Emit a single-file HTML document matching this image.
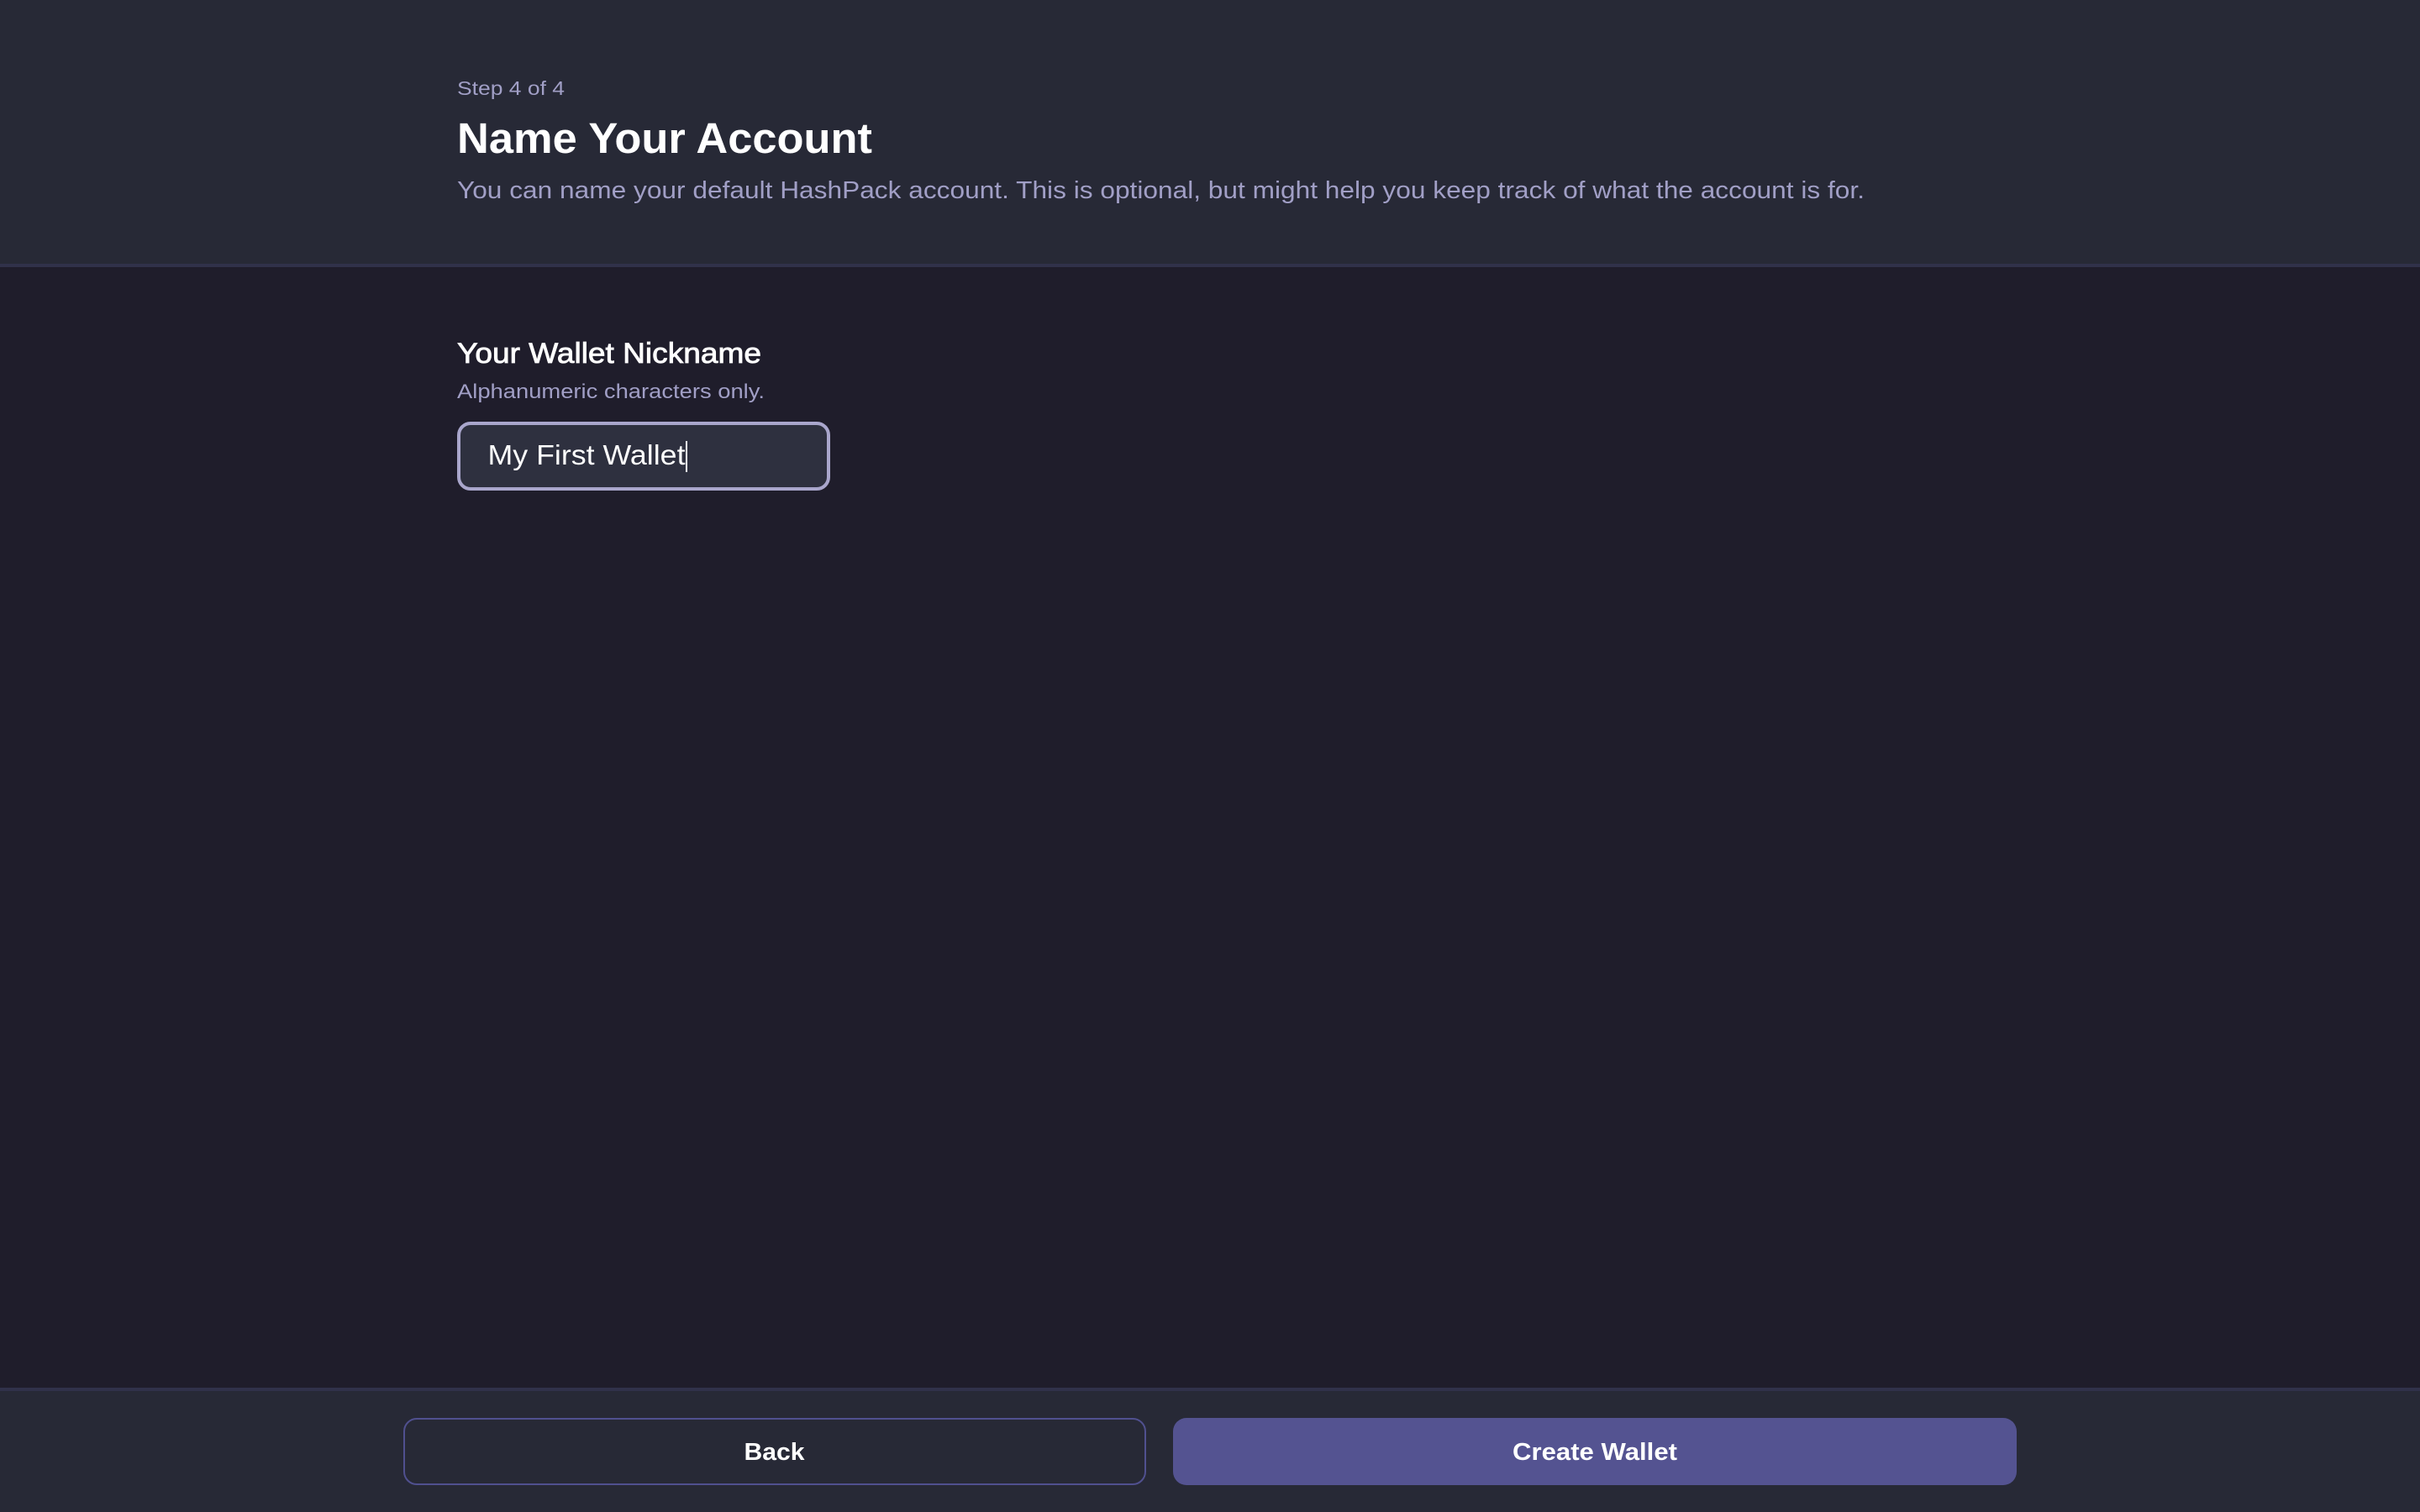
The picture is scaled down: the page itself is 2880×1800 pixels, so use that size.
<!DOCTYPE html>
<html lang="en">
<head>
<meta charset="utf-8">
<title>Name Your Account</title>
<style>
html,body{margin:0;padding:0;width:2880px;height:1800px;overflow:hidden;background:#1f1d2b}
body{position:relative;font-family:"Liberation Sans",sans-serif}
.box{position:absolute;box-sizing:border-box}
svg{position:absolute;left:0;top:0}
text{font-family:"Liberation Sans",sans-serif}
</style>
</head>
<body>
<div class="box" style="left:0;top:0;width:2880px;height:318px;background:#272936;border-bottom:4px solid #30314a"></div>
<div class="box" style="left:0;top:1652px;width:2880px;height:148px;background:#272936;border-top:4px solid #30314a"></div>
<div class="box" style="left:544px;top:502px;width:444px;height:82px;background:#2e303f;border:4px solid #a9a6cc;border-radius:16px"></div>
<div class="box" style="left:816px;top:525px;width:2px;height:37px;background:#fff"></div>
<div class="box" style="left:480px;top:1688px;width:884px;height:80px;border:2px solid #50508f;border-radius:16px"></div>
<div class="box" style="left:1396px;top:1688px;width:1004px;height:80px;background:#545391;border-radius:16px"></div>
<svg width="2880" height="1800" viewBox="0 0 2880 1800">
<text x="544" y="113" font-size="23" fill="#a19fc6" textLength="128" lengthAdjust="spacingAndGlyphs">Step 4 of 4</text>
<text x="544" y="182" font-size="51" font-weight="700" fill="#ffffff" textLength="494" lengthAdjust="spacingAndGlyphs">Name Your Account</text>
<text x="544" y="236" font-size="29" fill="#a19fc6" textLength="1675" lengthAdjust="spacingAndGlyphs">You can name your default HashPack account. This is optional, but might help you keep track of what the account is for.</text>
<text x="544" y="432" font-size="34" fill="#ffffff" stroke="#ffffff" stroke-width="0.8" textLength="362" lengthAdjust="spacingAndGlyphs">Your Wallet Nickname</text>
<text x="544" y="474" font-size="24" fill="#a19fc6" textLength="366" lengthAdjust="spacingAndGlyphs">Alphanumeric characters only.</text>
<text x="580.5" y="553" font-size="33" fill="#ffffff" textLength="235" lengthAdjust="spacingAndGlyphs">My First Wallet</text>
<text x="885.5" y="1738" font-size="29" font-weight="700" fill="#ffffff" textLength="72" lengthAdjust="spacingAndGlyphs">Back</text>
<text x="1800" y="1738" font-size="29" font-weight="700" fill="#ffffff" textLength="196" lengthAdjust="spacingAndGlyphs">Create Wallet</text>
</svg>
</body>
</html>
